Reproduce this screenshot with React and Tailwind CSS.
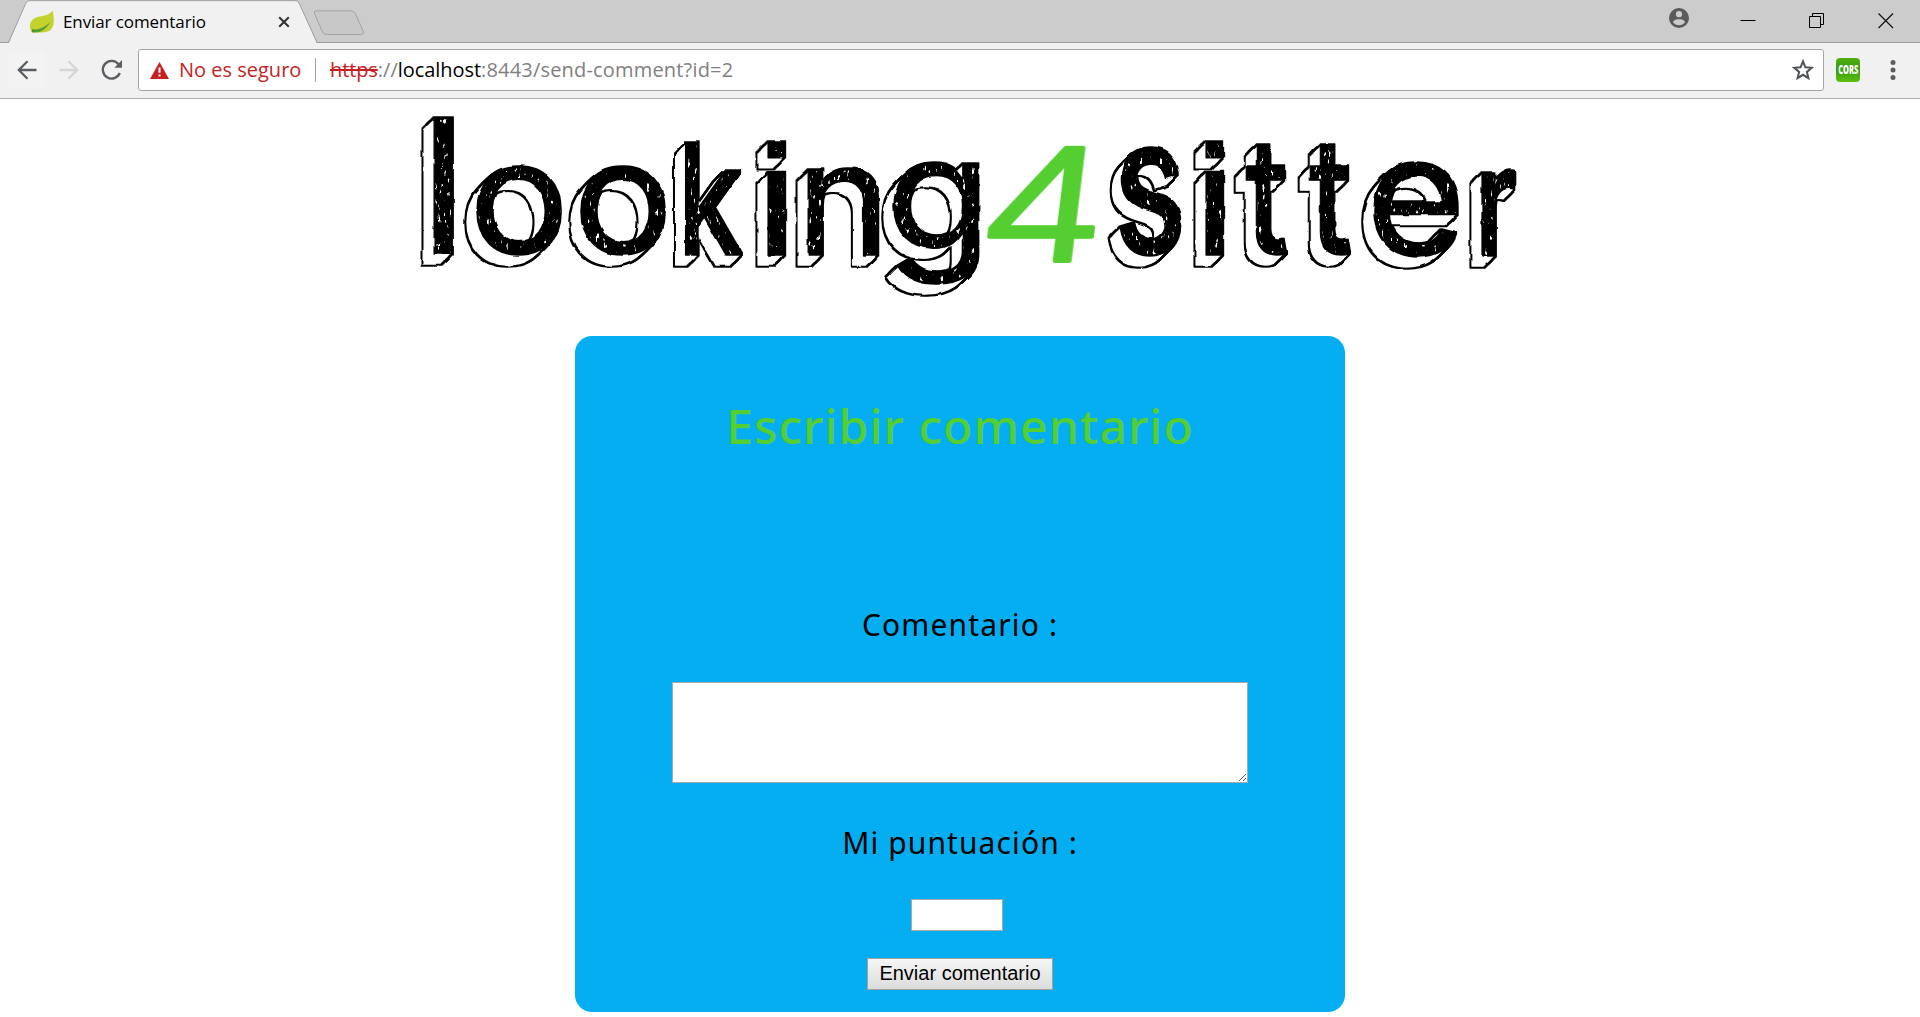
import React from "react";

// char, box: left, right, top, baseline of the front face; m: glyph left, right, ascent at 100px; w: weight
const LETTERS = [
  { ch: "l", box: [433, 453, 118, 254], m: [6, 20, 73], w: 600 },
  { ch: "o", box: [476, 562, 168, 253], m: [4.5, 56, 54.5], w: 400 },
  { ch: "o", box: [580, 666, 168, 253], m: [4.5, 56, 54.5], w: 400 },
  { ch: "k", box: [684, 744, 143, 255], m: [6, 57, 73], w: 500 },
  { ch: "i", box: [768, 785, 142, 255], m: [7, 21, 72.5], w: 700, f: "Liberation Sans, Arial, sans-serif" },
  { ch: "n", box: [807, 880, 169, 255], m: [7, 53, 55], w: 400 },
  { ch: "g", box: [893, 980, 163, 250], m: [4.5, 55, 55], w: 400 },
  { ch: "s", box: [1119, 1182, 149, 254], m: [4, 51, 55], w: 500 },
  { ch: "i", box: [1206, 1223, 142, 255], m: [7, 21, 72.5], w: 700, f: "Liberation Sans, Arial, sans-serif" },
  { ch: "t", box: [1245, 1288, 144, 254], m: [0, 34, 68], w: 500 },
  { ch: "t", box: [1309, 1352, 144, 254], m: [0, 34, 68], w: 500 },
  { ch: "e", box: [1373, 1458, 163, 255], m: [4.5, 54, 55], w: 400 },
  { ch: "r", box: [1481, 1515, 172, 256], m: [6, 38, 55], w: 600 },
];

function Letter({ ch, box, m, w, f = "Inter, sans-serif" }) {
  const [l, r, t, b] = box;
  const sx = (r - l) / (m[1] - m[0]);
  const sy = (b - t) / m[2];
  return (
    <text
      transform={`translate(${l - m[0] * sx} ${b}) scale(${sx} ${sy})`}
      fontFamily={f}
      fontWeight={w}
      fontSize="100"
      fill="#000"
    >
      {ch}
    </text>
  );
}

function Logo() {
  return (
    <svg viewBox="400 99 1120 237" width="1120" height="237" className="block shrink-0" role="img" aria-label="looking4sitter">
      <defs>
        <filter id="sketch" filterUnits="userSpaceOnUse" x="400" y="99" width="1120" height="237" colorInterpolationFilters="sRGB">
          <feOffset in="SourceAlpha" dx="-1" dy="1" result="a1" />
          <feMerge result="e1"><feMergeNode in="SourceAlpha" /><feMergeNode in="a1" /></feMerge>
          <feOffset in="e1" dx="-2" dy="2" result="a2" />
          <feMerge result="e2"><feMergeNode in="e1" /><feMergeNode in="a2" /></feMerge>
          <feOffset in="e2" dx="-4" dy="4" result="a3" />
          <feMerge result="e3"><feMergeNode in="e2" /><feMergeNode in="a3" /></feMerge>
          <feOffset in="e3" dx="-4" dy="4" result="a4" />
          <feMerge result="body"><feMergeNode in="e3" /><feMergeNode in="a4" /></feMerge>
          <feMorphology in="body" operator="dilate" radius="1" result="outline" />
          <feMorphology in="body" operator="erode" radius="1" result="inner" />
          <feFlood floodColor="#fff" />
          <feComposite in2="inner" operator="in" result="side" />
          <feTurbulence type="fractalNoise" baseFrequency="0.32 0.12" numOctaves="2" seed="7" result="grain" />
          <feColorMatrix in="grain" type="matrix" values="0 0 0 0 1  0 0 0 0 1  0 0 0 0 1  12 0 0 0 -8" result="scratch" />
          <feMorphology in="SourceAlpha" operator="erode" radius="2" result="core" />
          <feComposite in="scratch" in2="core" operator="in" result="marks" />
          <feMerge result="drawn">
            <feMergeNode in="outline" />
            <feMergeNode in="side" />
            <feMergeNode in="SourceGraphic" />
            <feMergeNode in="marks" />
          </feMerge>
          <feTurbulence type="fractalNoise" baseFrequency="0.06" numOctaves="2" seed="3" result="wobble" />
          <feDisplacementMap in="drawn" in2="wobble" scale="3" xChannelSelector="R" yChannelSelector="G" />
        </filter>
      </defs>
      <g filter="url(#sketch)" stroke="#000" strokeWidth="0.9" strokeLinejoin="round">
        {LETTERS.map((letter, i) => (
          <Letter key={i} {...letter} />
        ))}
      </g>
      <text
        transform="translate(974 261) skewX(-7) scale(2.02 1.56)"
        fontFamily="Inter, sans-serif"
        fontWeight="300"
        fontSize="100"
        fill="#55ce31"
        stroke="#55ce31"
        strokeWidth="2.600"
        strokeLinejoin="round"
      >
        4
      </text>
    </svg>
  );
}

function TabStrip() {
  return (
    <div className="relative flex h-[43px] items-start bg-[#cccccc]">
      <svg className="absolute inset-0" width="1920" height="43" fill="none">
        <path d="M0 42.5H8.5L26 3Q27.300 .8 29.500 .8H296Q298 .8 299 3L317 42.500H1920V43H0Z" fill="none" stroke="#9b9b9b" />
        <path d="M9 43L26.500 3Q27.500 1.300 29.500 1.300H295.500Q297.500 1.300 298.500 3L316.500 43Z" fill="#f1f1f1" />
        <path d="M316 10.800H351Q354 10.800 355.300 13.500L363.300 31.500Q364.300 34.500 361.500 34.500H326.500Q323.800 34.500 322.500 32L314.500 13.500Q313.700 10.800 316 10.800Z" fill="#c8c8c8" stroke="#a3a3a3" />
      </svg>
      <div className="relative flex h-[43px] w-full items-center">
        <svg className="ml-[29px] shrink-0" width="26" height="24" viewBox="0 0 26 24">
          <path d="M23.500 0.500C25.500 9 25.500 17 21 20.500C17 23 9 22.500 3 22.500C0 18 0 12 5 8.500C10 5 20 7 23.500 0.500Z" fill="#c3d22c" />
          <path d="M3 20C10 19.500 17 17 21.500 11.500C18 18 14 21 9 22.200L4 22.500Z" fill="#579f35" />
          <circle cx="4.300" cy="20.700" r="1.600" fill="#4a9637" />
        </svg>
        <span className="ml-[8px] w-[200px] text-[17px] leading-[24px] tracking-[-0.1px] text-black">Enviar comentario</span>
        <svg className="ml-[15px] shrink-0" width="12" height="12" viewBox="0 0 12 12" stroke="#333" strokeWidth="2">
          <path d="M1.200 1.200L10.800 10.800M10.800 1.200L1.200 10.800" />
        </svg>
        <svg className="mr-[51px] -mt-[7px] ml-auto shrink-0" width="20" height="20" viewBox="0 0 20 20">
          <circle cx="10" cy="10" r="10" fill="#5a5a5a" />
          <circle cx="10" cy="6.200" r="3.100" fill="#ccc" />
          <path d="M4 14.200C4.500 11.700 8 11.200 10 11.200S15.500 11.700 16 14.200C14.500 16.200 12.500 17.200 10 17.200S5.500 16.200 4 14.200Z" fill="#ccc" />
        </svg>
        <svg className="mt-[-2px] mr-[53px] shrink-0" width="16" height="16" stroke="#000"><path d="M0.500 7.500H15.500" /></svg>
        <svg className="mt-[-2px] mr-[53px] shrink-0" width="16" height="16" fill="none" stroke="#000">
          <path d="M.5 3.500H11.500V14.500H.5ZM3.500 3.500V.5H14.500V11.500H11.500" />
        </svg>
        <svg className="mt-[-2px] mr-[26px] shrink-0" width="16" height="16" stroke="#111" strokeWidth="1.200"><path d="M.5 .5L15 15M15 .5L.5 15" /></svg>
      </div>
    </div>
  );
}

function Toolbar() {
  return (
    <div className="flex h-[56px] items-center border-b border-[#b0b0b0] bg-[#f1f1f1] pb-px">
      <div className="ml-[9px] flex h-[36px] w-[36px] items-center justify-center bg-[#f3f3f3]">
        <svg width="20" height="20" viewBox="0 0 20 20" fill="none" stroke="#5a5e63" strokeWidth="2.300"><path d="M19.500 10H2M10.500 1.200L1.800 10L10.500 18.800" /></svg>
      </div>
      <svg className="ml-[14px]" width="20" height="20" viewBox="0 0 20 20" fill="none" stroke="#d5d5d5" strokeWidth="2.300"><path d="M.5 10H18M9.500 1.200L18.200 10L9.500 18.800" /></svg>
      <svg className="ml-[22px]" width="22" height="22" viewBox="0 0 22 22" fill="none">
        <path d="M18.800 14A8.800 8.800 0 1 1 17.500 5.200" stroke="#5a5e63" strokeWidth="2.300" />
        <path d="M21 1V8.700H13.300Z" fill="#5a5e63" />
      </svg>
      <div className="ml-[15px] flex h-[42px] w-[1686px] items-center rounded-[3px] border border-[#a6a6a6] bg-white text-[20px] leading-[28px]">
        <svg className="ml-[11px]" width="19" height="17" viewBox="0 0 19 17">
          <path d="M9.500 0L19 17H0Z" fill="#c5221f" />
          <path d="M8.500 5.500H10.500V10.800H8.500ZM8.500 12.500H10.500V14.500H8.500Z" fill="#fff" />
        </svg>
        <span className="ml-[10px] w-[125px] whitespace-nowrap text-[#c5221f]">No es seguro</span>
        <span className="ml-[11px] h-[24px] w-px bg-[#a0a0a0]" />
        <span className="ml-[14px] flex whitespace-nowrap text-[#808080]">
          <span className="tracking-[-0.1px] text-[#c5221f] line-through decoration-2">https</span>
          <span>://</span>
          <span className="tracking-[-0.05px] text-black">localhost</span>
          <span className="tracking-[0.18px]">:8443/send-comment?id=2</span>
        </span>
        <svg className="mr-[9px] ml-auto" width="22" height="22" viewBox="0 0 22 22" fill="none" stroke="#505357" strokeWidth="2">
          <path d="M11 2.300L13.400 8.300L19.700 8.800L14.900 12.900L16.400 19.200L11 15.800L5.600 19.200L7.100 12.900L2.300 8.800L8.600 8.300Z" />
        </svg>
      </div>
      <div className="ml-[12px] flex h-[24px] w-[24px] items-center justify-center rounded-[4px] bg-linear-to-b from-[#4fae14] via-[#3a9a0e] to-[#5cc012]">
        <span className="scale-x-[0.62] text-[12px] leading-none font-extrabold text-white">CORS</span>
      </div>
      <svg className="ml-[30px]" width="6" height="22" viewBox="0 0 6 22" fill="#5a5e63">
        <circle cx="3" cy="3.500" r="2.500" /><circle cx="3" cy="11" r="2.500" /><circle cx="3" cy="18.500" r="2.500" />
      </svg>
    </div>
  );
}

export default function App() {
  return (
    <div className="flex h-[1017px] w-[1920px] flex-col overflow-hidden bg-white font-['Open_Sans','Noto_Sans',sans-serif]">
      <TabStrip />
      <Toolbar />
      <main className="flex flex-col items-center font-['Noto_Sans','Open_Sans',sans-serif] text-black">
        <Logo />
        <form className="flex h-[676px] w-[770px] flex-col items-center rounded-[17px] bg-[#05aef1] pt-[60px]">
          <h1 className="text-[48px] leading-[60px] font-medium tracking-[1.1px] text-[#55ce31]">Escribir comentario</h1>
          <label className="mt-[149px] text-[30px] leading-[40px] tracking-[1.15px]">Comentario :</label>
          <textarea className="mt-[37px] block h-[101px] w-[576px] shrink-0 resize border border-[#a9a9a9] bg-white" />
          <label className="mt-[40px] text-[30px] leading-[40px] tracking-[1.1px]">Mi puntuación :</label>
          <input className="mt-[36px] mr-[6px] block h-[32px] w-[92px] shrink-0 border border-[#a9a9a9] bg-white" />
          <button type="button" className="mt-[27px] h-[32px] w-[186px] shrink-0 border border-[#a0a0a0] bg-linear-to-b from-[#f6f6f6] to-[#dcdcdc] pb-[2px] font-['Liberation_Sans',Arial,sans-serif] text-[20px] leading-[28px] whitespace-nowrap">
            Enviar comentario
          </button>
        </form>
      </main>
    </div>
  );
}
